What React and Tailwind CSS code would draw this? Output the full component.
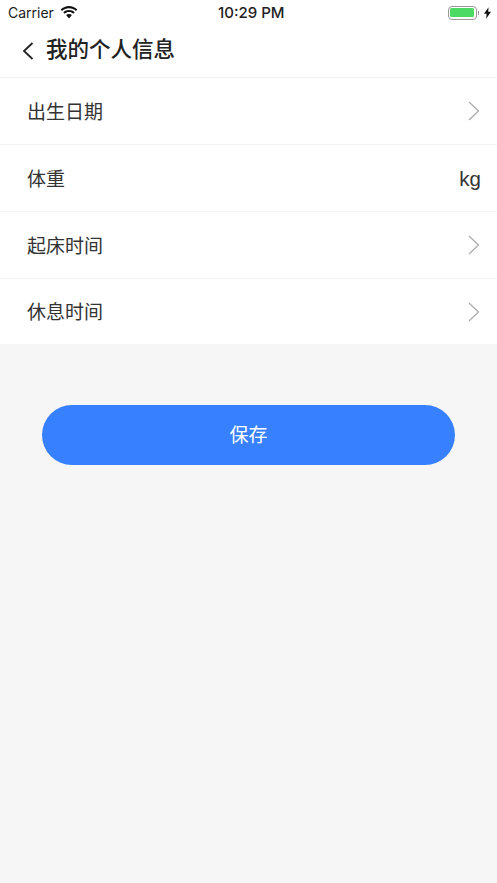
import React from 'react'

const ROWS = [
  { label: '出生日期', arrow: true },
  { label: '体重', unit: 'kg' },
  { label: '起床时间', arrow: true },
  { label: '休息时间', arrow: true },
]

function Arrow() {
  return (
    <svg className="w-[12px] h-[20px]" viewBox="0 0 12 20" fill="none" stroke="#aaaaaa" strokeWidth="1.2">
      <path d="M1 1l9.500 9L1 19" />
    </svg>
  )
}

export default function App() {
  return (
    <div className="w-[497px] h-[883px] bg-[#f6f6f6] font-['Liberation_Sans','Noto_Sans_CJK_SC',sans-serif] text-[#222]">
      {/* status bar */}
      <div className="relative h-[25px] bg-white flex items-center justify-between pl-[8px] pr-[6px]">
        <div className="flex items-center gap-[6px]">
          <span className="text-[14px] font-['Inter','Noto_Sans_CJK_SC',sans-serif] text-[#222]">Carrier</span>
          <svg className="w-[18px] h-[13px] -mt-[1px]" viewBox="0 0 18 13" fill="#111">
            <path d="M9 2.200c2.700 0 5.200 1 7 2.800l1.300-1.400C15 1.400 12.100 0 9 0S3 1.400.700 3.600L2 5c1.800-1.800 4.300-2.800 7-2.800z" />
            <path d="M9 6c1.700 0 3.200.6 4.400 1.700l1.300-1.400C13.200 4.900 11.200 4.100 9 4.100s-4.200.8-5.700 2.200l1.300 1.400C5.800 6.600 7.300 6 9 6z" />
            <path d="M9 7.900c-1.100 0-2.100.4-2.900 1.100L9 12.500 11.900 9C11.100 8.300 10.100 7.900 9 7.900z" />
          </svg>
        </div>
        <span className="absolute left-[218px] top-[4px] text-[15px] leading-[18px] font-medium font-['Inter',sans-serif] text-[#222]">10:29 PM</span>
        <div className="flex items-center gap-[2px]">
          <div className="w-[29px] h-[14px] rounded-[4px] border border-[#999] p-[1.5px]">
            <div className="w-full h-full rounded-[1.5px] bg-[#4cd964]" />
          </div>
          <div className="w-[1.5px] h-[4px] bg-[#999] -ml-[1px]" />
          <svg className="w-[7px] h-[12px] ml-[3px]" viewBox="0 0 8 13" fill="#111">
            <path d="M5.200 0L0 7.400h3L2.400 13 8 5.200H4.800z" />
          </svg>
        </div>
      </div>

      {/* header */}
      <div className="h-[53px] bg-white flex items-center pl-[22px] border-b border-[#f2f2f2]">
        <svg className="w-[12px] h-[18px]" viewBox="0 0 12 18" fill="none" stroke="#222" strokeWidth="1.800">
          <path d="M10.500 1L2 9l8.500 8" />
        </svg>
        <h1 className="ml-[12px] text-[21.5px] font-medium leading-none text-[#222]">我的个人信息</h1>
      </div>

      {/* rows */}
      <div className="bg-white">
        {ROWS.map((row, i) => (
          <div key={row.label} className={`flex items-center justify-between pl-[27px] pr-[17px] ${i < ROWS.length - 1 ? 'h-[67px] border-b border-[#f2f2f2]' : 'h-[65px]'}`}>
            <span className="pt-[4px] text-[19px] text-[#333]">{row.label}</span>
            {row.arrow && <Arrow />}
            {row.unit && <span className="pt-[2px] text-[20.500px] -mr-[1px] text-[#333]">{row.unit}</span>}
          </div>
        ))}
      </div>

      {/* save */}
      <div className="px-[42px] pt-[61px]">
        <button className="w-full h-[60px] pt-[2px] rounded-full bg-[#3780ff] text-white text-[19px]">保存</button>
      </div>
    </div>
  )
}
